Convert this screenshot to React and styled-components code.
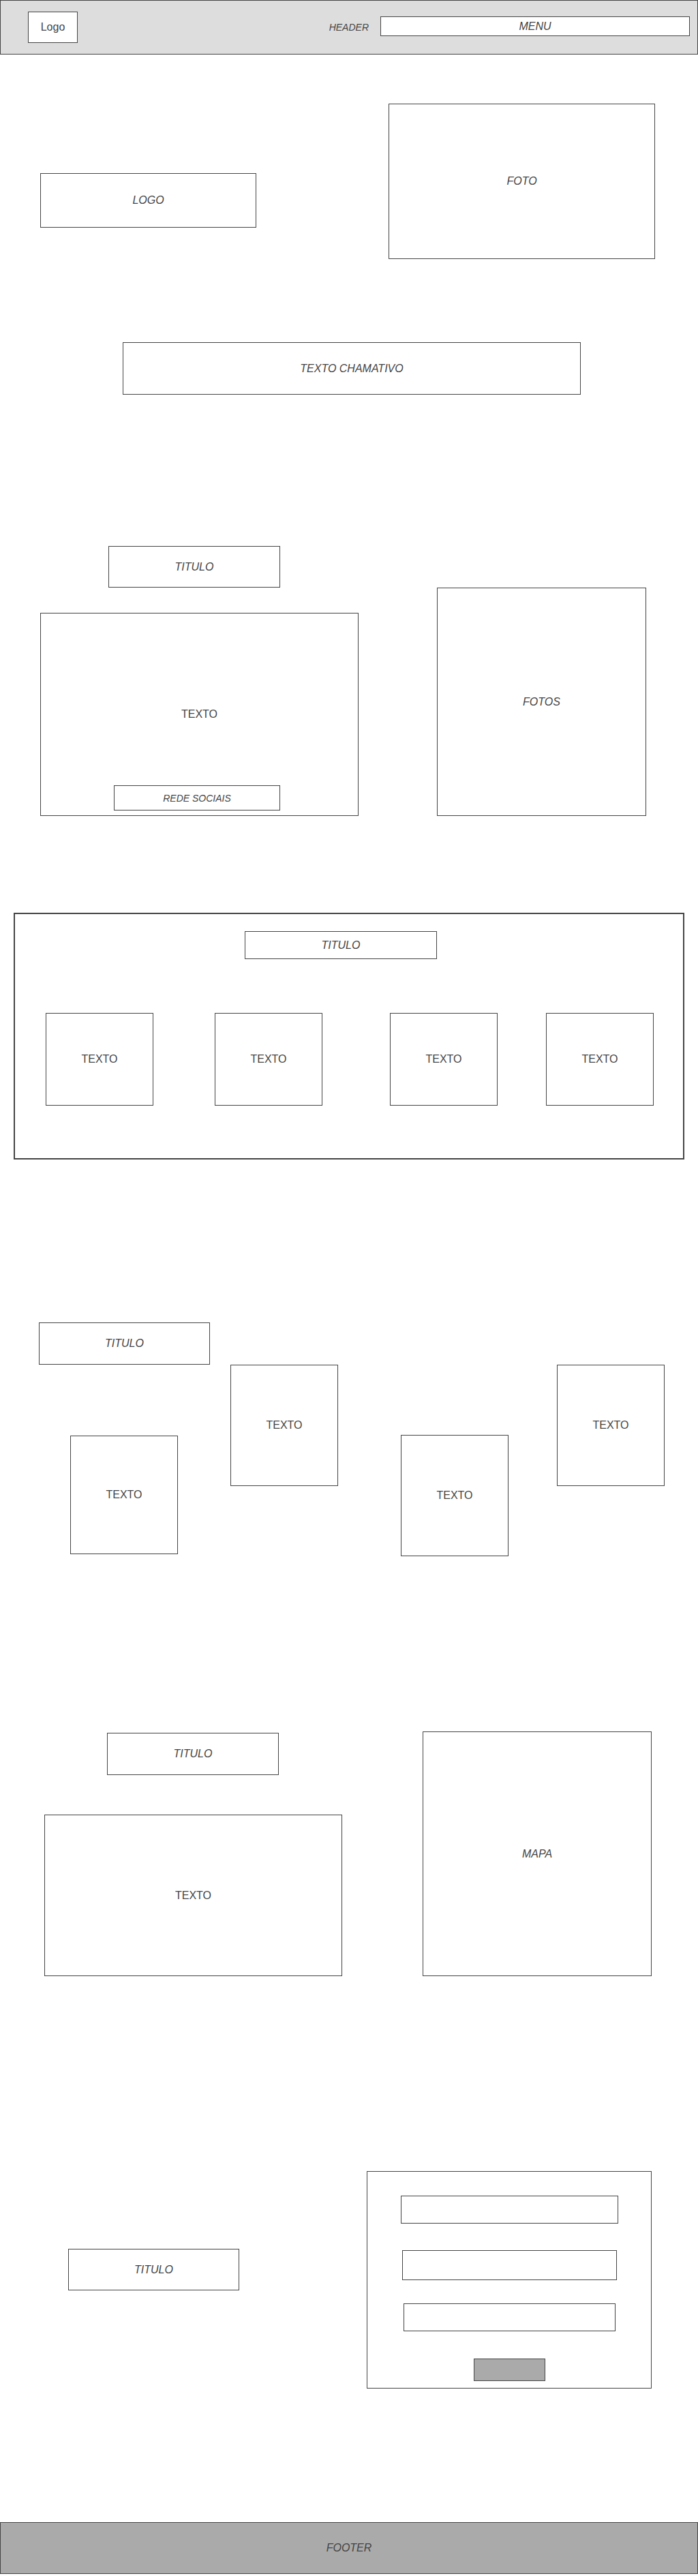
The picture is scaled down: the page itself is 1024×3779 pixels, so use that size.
import React from "react";
import styled, { createGlobalStyle } from "styled-components";

const GlobalStyle = createGlobalStyle`
  html, body {
    margin: 0;
    padding: 0;
    background: #ffffff;
  }
  body {
    font-family: "Liberation Sans", Arial, Helvetica, sans-serif;
    color: #444444;
  }
  *, *::before, *::after {
    box-sizing: border-box;
  }
`;

const Page = styled.div`
  width: 1024px;
  display: flex;
  flex-direction: column;
  align-items: flex-start;
`;

/* ---------- header ---------- */
const Header = styled.header`
  width: 1024px;
  height: 80px;
  background: #dddddd;
  border: 1px solid #444444;
  display: flex;
  align-items: center;
  padding: 0 11px 0 40px;
`;

const HeaderLogo = styled.div`
  width: 73px;
  height: 46px;
  background: #ffffff;
  border: 1px solid #444444;
  display: flex;
  align-items: center;
  justify-content: center;
  font-size: 16px;
`;

const HeaderLabel = styled.span`
  margin-left: auto;
  margin-right: 17px;
  font-size: 14px;
  font-style: italic;
`;

const MenuBar = styled.nav`
  width: 454px;
  height: 29px;
  margin-bottom: 3px;
  background: #ffffff;
  border: 1px solid #444444;
  display: flex;
  align-items: center;
  justify-content: center;
  font-size: 16px;
  font-style: italic;
`;

/* ---------- generic wireframe block ---------- */
const Frame = styled.div`
  flex: none;
  width: ${(p) => p.$w}px;
  height: ${(p) => p.$h}px;
  margin-top: ${(p) => p.$mt || 0}px;
  margin-left: ${(p) => p.$ml || 0}px;
  border: 1px solid #444444;
  background: ${(p) => p.$fill || "#ffffff"};
  display: flex;
  align-items: center;
  justify-content: center;
  font-size: 16px;
  font-style: ${(p) => (p.$italic ? "italic" : "normal")};
`;

const Placeholder = styled(Frame).attrs({ $italic: true })``;
const TitleBox = styled(Frame).attrs({ $italic: true })``;
const TextCard = styled(Frame)``;

/* ---------- layout rows ---------- */
const Row = styled.section`
  display: flex;
  align-items: ${(p) => p.$align || "flex-start"};
  margin-top: ${(p) => p.$mt || 0}px;
  padding-top: ${(p) => p.$pt || 0}px;
  padding-left: ${(p) => p.$pl || 0}px;
`;

const Column = styled.div`
  display: flex;
  flex-direction: column;
  align-items: flex-start;
`;

/* ---------- about block ---------- */
const AboutText = styled.div`
  width: 467px;
  height: 298px;
  margin-top: 37px;
  border: 1px solid #444444;
  display: grid;
  grid-template-rows: 1fr auto 1fr;
  justify-items: center;
  font-size: 16px;
`;

const AboutCopy = styled.span`
  grid-row: 2;
`;

const SocialBar = styled.div`
  grid-row: 3;
  align-self: end;
  justify-self: start;
  width: 244px;
  height: 37px;
  margin: 0 0 7px 107px;
  border: 1px solid #444444;
  display: flex;
  align-items: center;
  justify-content: center;
  font-size: 14px;
  font-style: italic;
`;

/* ---------- services panel ---------- */
const ServicesPanel = styled.section`
  width: 984px;
  height: 362px;
  margin-top: 142px;
  margin-left: 20px;
  border: 2px solid #444444;
  display: flex;
  flex-direction: column;
  align-items: flex-start;
`;

const CardRow = styled.div`
  display: flex;
  align-items: flex-start;
  margin-top: ${(p) => p.$mt || 0}px;
  padding-left: ${(p) => p.$pl || 0}px;
`;

/* ---------- contact form ---------- */
const ContactForm = styled.form`
  flex: none;
  width: 418px;
  height: 319px;
  margin-left: 187px;
  border: 1px solid #444444;
  display: flex;
  flex-direction: column;
  align-items: center;
  padding-top: 35px;
`;

const FormField = styled.div`
  width: ${(p) => p.$w}px;
  height: ${(p) => p.$h}px;
  margin-top: ${(p) => p.$mt || 0}px;
  border: 1px solid #444444;
  background: #ffffff;
`;

const SubmitButton = styled.div`
  width: 105px;
  height: 33px;
  margin-top: 40px;
  background: #aaaaaa;
  border: 1px solid #444444;
`;

/* ---------- footer ---------- */
const Footer = styled.footer`
  width: 1024px;
  height: 76px;
  margin-top: 196px;
  background: #aaaaaa;
  border: 1px solid #444444;
  display: flex;
  align-items: center;
  justify-content: center;
  font-size: 16px;
  font-style: italic;
`;

const services = [
  { ml: 45 },
  { ml: 90 },
  { ml: 99 },
  { ml: 71 },
];

const team = [
  { ml: 103, mt: 104, h: 174 },
  { ml: 77, mt: 0, h: 178 },
  { ml: 92, mt: 103, h: 178 },
  { ml: 71, mt: 0, h: 178 },
];

export default function App() {
  return (
    <>
      <GlobalStyle />
      <Page>
        <Header>
          <HeaderLogo>Logo</HeaderLogo>
          <HeaderLabel>HEADER</HeaderLabel>
          <MenuBar>MENU</MenuBar>
        </Header>

        {/* hero */}
        <Row $pt={72}>
          <Placeholder $w={317} $h={80} $ml={59} $mt={102}>
            LOGO
          </Placeholder>
          <Placeholder $w={391} $h={228} $ml={194}>
            FOTO
          </Placeholder>
        </Row>
        <Row $mt={122} $pl={180}>
          <Placeholder $w={672} $h={77}>
            TEXTO CHAMATIVO
          </Placeholder>
        </Row>

        {/* about */}
        <Row $mt={222} $pl={59} $align="flex-end">
          <Column>
            <TitleBox $w={252} $h={61} $ml={100}>
              TITULO
            </TitleBox>
            <AboutText>
              <AboutCopy>TEXTO</AboutCopy>
              <SocialBar>REDE SOCIAIS</SocialBar>
            </AboutText>
          </Column>
          <Placeholder $w={307} $h={335} $ml={115}>
            FOTOS
          </Placeholder>
        </Row>

        {/* services */}
        <ServicesPanel>
          <TitleBox $w={282} $h={41} $ml={337} $mt={25}>
            TITULO
          </TitleBox>
          <CardRow $mt={79}>
            {services.map((s, i) => (
              <TextCard key={i} $w={158} $h={136} $ml={s.ml}>
                TEXTO
              </TextCard>
            ))}
          </CardRow>
        </ServicesPanel>

        {/* team */}
        <Row $mt={239} $pl={57}>
          <TitleBox $w={251} $h={62}>
            TITULO
          </TitleBox>
        </Row>
        <CardRow>
          {team.map((c, i) => (
            <TextCard key={i} $w={158} $h={c.h} $ml={c.ml} $mt={c.mt}>
              TEXTO
            </TextCard>
          ))}
        </CardRow>

        {/* location */}
        <Row $mt={257} $pl={65} $align="flex-end">
          <Column>
            <TitleBox $w={252} $h={62} $ml={92}>
              TITULO
            </TitleBox>
            <TextCard $w={437} $h={237} $mt={58}>
              TEXTO
            </TextCard>
          </Column>
          <Placeholder $w={336} $h={359} $ml={118}>
            MAPA
          </Placeholder>
        </Row>

        {/* contact */}
        <Row $mt={286} $pl={100}>
          <TitleBox $w={251} $h={61} $mt={114}>
            TITULO
          </TitleBox>
          <ContactForm>
            <FormField $w={319} $h={41} />
            <FormField $w={315} $h={44} $mt={39} />
            <FormField $w={311} $h={41} $mt={34} />
            <SubmitButton />
          </ContactForm>
        </Row>

        <Footer>FOOTER</Footer>
      </Page>
    </>
  );
}
